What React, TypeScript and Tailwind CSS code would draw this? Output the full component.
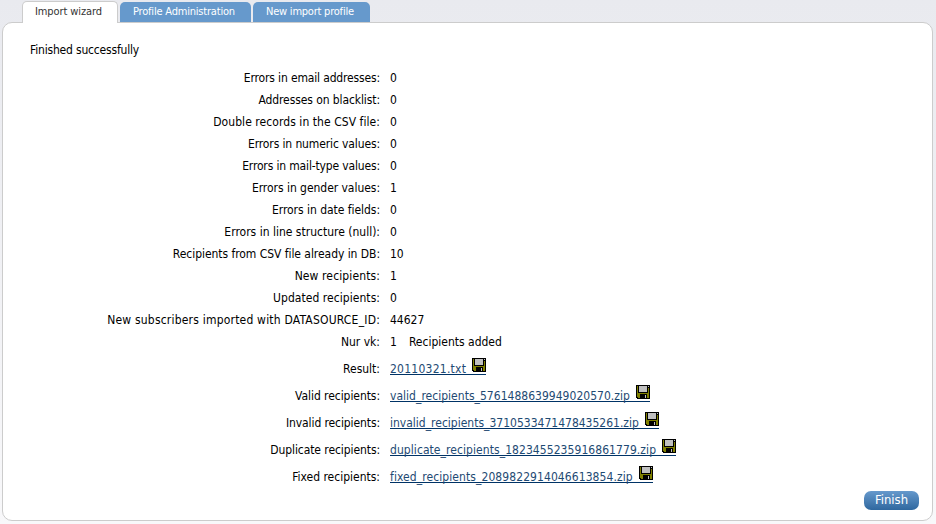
import { Fragment } from 'react';

type Stat = { label: string; value: string; track: string; note?: string };

const stats: Stat[] = [
  { label: 'Errors in email addresses:', value: '0', track: 'tracking-[-0.15px]' },
  { label: 'Addresses on blacklist:', value: '0', track: 'tracking-[-0.09px]' },
  { label: 'Double records in the CSV file:', value: '0', track: 'tracking-[0.06px]' },
  { label: 'Errors in numeric values:', value: '0', track: 'tracking-[-0.12px]' },
  { label: 'Errors in mail-type values:', value: '0', track: 'tracking-[-0.15px]' },
  { label: 'Errors in gender values:', value: '1', track: 'tracking-[-0.04px]' },
  { label: 'Errors in date fields:', value: '0', track: 'tracking-[-0.04px]' },
  { label: 'Errors in line structure (null):', value: '0', track: 'tracking-normal' },
  { label: 'Recipients from CSV file already in DB:', value: '10', track: 'tracking-[-0.05px]' },
  { label: 'New recipients:', value: '1', track: 'tracking-[0.12px]' },
  { label: 'Updated recipients:', value: '0', track: 'tracking-[0.05px]' },
  { label: 'New subscribers imported with DATASOURCE_ID:', value: '44627', track: 'tracking-[0.205px]' },
  { label: 'Nur vk:', value: '1', track: 'tracking-normal', note: 'Recipients added' },
];

type Download = { label: string; labelTrack: string; file: string; track: string };

const files: Download[] = [
  { label: 'Result:', labelTrack: 'tracking-normal', file: '20110321.txt', track: 'tracking-[0.25px]' },
  { label: 'Valid recipients:', labelTrack: 'tracking-[-0.06px]', file: 'valid_recipients_5761488639949020570.zip', track: 'tracking-[0.02px]' },
  { label: 'Invalid recipients:', labelTrack: 'tracking-[-0.1px]', file: 'invalid_recipients_3710533471478435261.zip', track: 'tracking-normal' },
  { label: 'Duplicate recipients:', labelTrack: 'tracking-[-0.08px]', file: 'duplicate_recipients_1823455235916861779.zip', track: 'tracking-[0.065px]' },
  { label: 'Fixed recipients:', labelTrack: 'tracking-normal', file: 'fixed_recipients_2089822914046613854.zip', track: 'tracking-[0.08px]' },
];

// Underscores sit slightly lower so that they meet the link's rule.
function FileName({ name }: { name: string }) {
  return name.split('_').map((part, i) => (
    <Fragment key={i}>
      {i > 0 && <span className="relative top-px">_</span>}
      {part}
    </Fragment>
  ));
}

function Disk() {
  return (
    <svg className="ml-1.5 h-3.5 w-3.5 shrink-0" viewBox="0 0 14 14" shapeRendering="crispEdges">
      <path fill="#000" d="M0 0h14v14H1l-1-1z" />
      <path fill="#808000" d="M1 1h1v7h10V3h1v10h-1V9H3v4H2l-1-1z" />
      <path fill="#c0c0c0" d="M3 1h8v6H3zM12 1h1v1h-1z" />
      <path fill="#808000" d="M3 9h1v4H3zM11 9h1v4h-1z" />
      <path fill="#c0c0c0" d="M9 10h1v3H9z" />
    </svg>
  );
}

export default function App() {
  return (
    <div className="flex h-[524px] w-[936px] flex-col bg-linear-to-b from-[#e9eaef] to-[#f8f8fa] pr-[3px] pl-0.5 font-['DejaVu_Sans_Condensed','DejaVu_Sans',sans-serif] text-[12px] text-black">
      <nav className="z-10 -mb-px flex h-[23px] items-end pt-px pl-5 text-[11px] leading-[20px]">
        <div className="h-[22px] w-24 rounded-t-[5px] border border-b-0 border-[#cccccc] bg-white pl-3 tracking-[-0.1px] text-[#333333]">Import wizard</div>
        <div className="mb-px ml-0.5 h-5 w-[131px] rounded-t-[5px] bg-[#6699cc] pl-[13px] tracking-[-0.2px] text-white">Profile Administration</div>
        <div className="mb-px ml-0.5 h-5 w-[117px] rounded-t-[5px] bg-[#6699cc] pl-[13px] tracking-[-0.22px] text-white">New import profile</div>
      </nav>
      <main className="flex h-[499px] flex-col rounded-[10px] border border-[#cccccc] bg-white">
        <p className="mt-4 ml-[27px] h-[22px] leading-[22px] tracking-[-0.18px]">Finished successfully</p>
        <div className="mt-[6px]">
          {stats.map(({ label, value, track, note }) => (
            <div key={label} className="flex h-[22px] leading-[22px]">
              <span className={`w-[377px] text-right ${track}`}>{label}</span>
              <span className="ml-2.5">{value}</span>
              {note && <span className="ml-3">{note}</span>}
            </div>
          ))}
          {files.map(({ label, labelTrack, file, track }) => (
            <div key={label} className="flex h-[27px] leading-[32px]">
              <span className={`w-[377px] text-right ${labelTrack}`}>{label}</span>
              <a href="#" className="mt-[5px] ml-2.5 flex h-[17px] border-b border-[#003366] text-[#1e4a73]">
                <span className={`-mt-[5px] ${track}`}>
                  <FileName name={file} />
                </span>
                <Disk />
              </a>
            </div>
          ))}
        </div>
        <button className="mt-auto mr-[13px] mb-[10px] h-[19px] w-[55px] self-end rounded-[7px] bg-linear-to-b from-[#6699cc] to-[#2f689f] pb-0.5 text-[13px] leading-[17px] text-white">Finish</button>
      </main>
    </div>
  );
}
